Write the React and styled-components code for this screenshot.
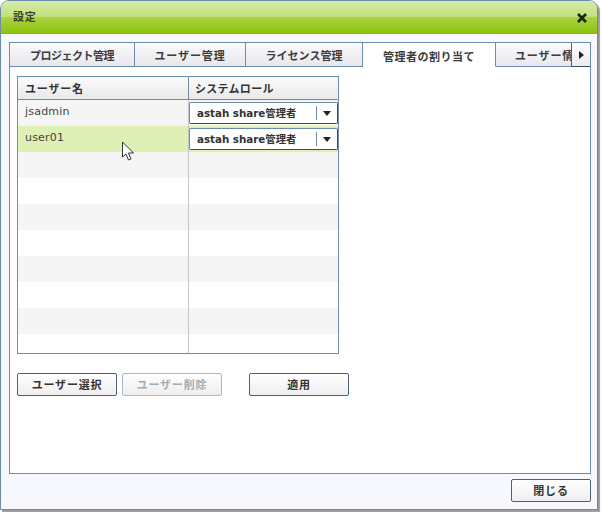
import styled, {createGlobalStyle} from 'styled-components'

const Global = createGlobalStyle`
  html, body { margin: 0; padding: 0; background: #fff; }
  * { box-sizing: border-box; }
  body { font-family: "DejaVu Sans", "Noto Sans CJK JP", sans-serif; font-size: 11px; color: #333; }
`
const Page = styled.div`
  width: 602px;
  height: 512px;
  overflow: hidden;
  position: relative;
`
const Window = styled.div`
  width: 598px;
  height: 510px;
  display: flex;
  flex-direction: column;
  background: #f6f8fe;
  border: 1px solid #6c8cab;
  border-radius: 9px 9px 0 0;
  box-shadow: 2px 2px 1px #9a9a9a;
  overflow: hidden;
`
const TitleBar = styled.div`
  height: 33px;
  flex: none;
  display: flex;
  align-items: center;
  justify-content: space-between;
  padding: 0 9px 0 12px;
  background: linear-gradient(#d6eba4 0, #c2e180 48%, #a9d33f 52%, #8cc30f 100%);
  border-bottom: 1px solid #86bb0e;
`
const Title = styled.span`
  font: bold 11px "Noto Sans CJK JP", sans-serif;
  letter-spacing: 0.7px;
  color: #3a3f2c;
  margin-top: -3px;
`
const CloseIcon = styled.svg`
  width: 12px;
  height: 12px;
  display: block;
  margin-top: 1px;
`
const Content = styled.div`
  flex: 1;
  display: flex;
  padding: 8px 6px 0 8px;
  min-height: 0;
`
const TabPanel = styled.div`
  position: relative;
  width: 582px;
  height: 432px;
  border: 1px solid #6c8cab;
  background: #fff;
  display: flex;
  flex-direction: column;
`
const TabBar = styled.div`
  display: flex;
  height: 24px;
  flex: none;
  overflow: hidden;
`
const Tab = styled.div`
  flex: none;
  width: ${p => p.$w}px;
  display: flex;
  align-items: center;
  justify-content: center;
  white-space: nowrap;
  font: bold 11px "Noto Sans CJK JP", sans-serif;
  letter-spacing: ${p => p.$ls}px;
  color: #3c3c3c;
  border-right: 1px solid #6c8cab;
  border-bottom: 1px solid ${p => p.$active ? '#fff' : '#6c8cab'};
  background: ${p => p.$active ? '#fff' : 'linear-gradient(#fbfbfd, #e6e6ec)'};
  padding-top: ${p => p.$active ? '2px' : '0'};
`
const TabFill = styled.div`
  flex: 1;
  border-bottom: 1px solid #6c8cab;
`
const ScrollButton = styled.div`
  position: absolute;
  top: 0;
  right: 0;
  width: 19px;
  height: 24px;
  display: flex;
  align-items: center;
  justify-content: center;
  background: linear-gradient(#fdfdfe, #ececf0);
  border-left: 1px solid #4a6078;
  border-bottom: 1px solid #3e4f60;
  &::after {
    content: '';
    border-left: 5px solid #222;
    border-top: 4px solid transparent;
    border-bottom: 4px solid transparent;
  }
`
const TabBody = styled.div`
  flex: 1;
  padding: 9px 7px 0;
  display: flex;
  flex-direction: column;
`
const Table = styled.div`
  width: 322px;
  height: 278px;
  border: 1px solid #6c8cab;
  display: flex;
  flex-direction: column;
  overflow: hidden;
`
const HeaderRow = styled.div`
  display: grid;
  grid-template-columns: 171px 149px;
  height: 23px;
  flex: none;
  border-bottom: 1px solid #6c8cab;
  background: linear-gradient(#fbfbfb, #e9e9e9);
`
const HeaderCell = styled.div`
  display: flex;
  align-items: center;
  padding-left: ${p => p.$pad}px;
  font: bold 11px "Noto Sans CJK JP", sans-serif;
  letter-spacing: ${p => p.$ls}px;
  color: #333;
  border-right: ${p => p.$last ? '0' : '1px solid #6c8cab'};
`
const Row = styled.div`
  display: grid;
  grid-template-columns: 171px 149px;
  height: 26px;
  flex: none;
  background: ${p => p.$selected ? '#def0b6' : p.$odd ? '#f5f5f5' : '#fff'};
`
const NameCell = styled.div`
  padding: 5px 0 0 7px;
  font-size: 11px;
  line-height: 14px;
  color: #444;
  letter-spacing: 0.2px;
  border-right: 1px solid #c6c6c6;
`
const RoleCell = styled.div`
  padding-top: 2px;
`
const Select = styled.div`
  width: 149px;
  height: 22px;
  display: flex;
  align-items: center;
  background: #fff;
  border: 1px solid #6c8cab;
  border-bottom-color: #3e4f60;
  border-right-color: #3e4f60;
  border-radius: 2px;
  padding-left: 7px;
`
const SelectText = styled.span`
  flex: 1;
  font: bold 10.3px "DejaVu Sans", "Noto Sans CJK JP", sans-serif;
  color: #333;
  white-space: nowrap;
  margin-bottom: 2px;
`
const SelectArrow = styled.span`
  width: 21px;
  height: 14px;
  display: flex;
  align-items: center;
  justify-content: center;
  border-left: 1px solid #6c8cab;
  &::after {
    content: '';
    border-top: 5px solid #222;
    border-left: 4px solid transparent;
    border-right: 4px solid transparent;
  }
`
const Actions = styled.div`
  display: flex;
  margin-top: 19px;
  gap: 5px;
`
const Button = styled.div`
  width: 100px;
  height: 23px;
  display: flex;
  align-items: center;
  justify-content: center;
  padding-bottom: 2px;
  font: bold 11px "Noto Sans CJK JP", sans-serif;
  letter-spacing: 0.8px;
  color: ${p => p.$disabled ? '#a4acb0' : '#333'};
  background: linear-gradient(#ffffff, #eeeeee);
  border: 1px solid ${p => p.$disabled ? '#aab8c4' : '#4d6074'};
  border-radius: 2px;
  margin-left: ${p => p.$gap || 0}px;
`
const Footer = styled.div`
  flex: none;
  height: 36px;
  display: flex;
  justify-content: flex-end;
  padding: 6px 6px 0 0;
`
const CloseButton = styled(Button)`
  width: 80px;
`
const Cursor = styled.svg`
  position: absolute;
  left: 121px;
  top: 141px;
  width: 15px;
  height: 21px;
`

const rows = [
  {name: 'jsadmin', role: 'astah share管理者'},
  {name: 'user01', role: 'astah share管理者', selected: true},
  {}, {}, {}, {}, {}, {}, {}, {},
]

const tabs = [
  {label: 'プロジェクト管理', w: 125, ls: -0.5},
  {label: 'ユーザー管理', w: 111, ls: 0.9},
  {label: 'ライセンス管理', w: 117, ls: 0},
  {label: '管理者の割り当て', w: 133, ls: 0.5, active: true},
  {label: 'ユーザー情報', w: 110, ls: 0.9},
]

const App = () => {
  return (
    <Page>
      <Global />
      <Window>
        <TitleBar>
          <Title>設定</Title>
          <CloseIcon viewBox="0 0 12 12">
            <path d="M2 2 L10 10 M10 2 L2 10" stroke="#1c2412" strokeWidth="2.6" />
          </CloseIcon>
        </TitleBar>
        <Content>
          <TabPanel>
            <TabBar>
              {tabs.map(t => (
                <Tab key={t.label} $w={t.w} $ls={t.ls} $active={t.active}>{t.label}</Tab>
              ))}
              <TabFill />
            </TabBar>
            <ScrollButton />
            <TabBody>
              <Table>
                <HeaderRow>
                  <HeaderCell $pad={7} $ls={0.8}>ユーザー名</HeaderCell>
                  <HeaderCell $pad={6} $ls={0.3} $last>システムロール</HeaderCell>
                </HeaderRow>
                {rows.map((r, i) => (
                  <Row key={i} $odd={i % 2 === 0} $selected={r.selected}>
                    <NameCell>{r.name}</NameCell>
                    <RoleCell>
                      {r.role && (
                        <Select>
                          <SelectText>{r.role}</SelectText>
                          <SelectArrow />
                        </Select>
                      )}
                    </RoleCell>
                  </Row>
                ))}
              </Table>
              <Actions>
                <Button>ユーザー選択</Button>
                <Button $disabled>ユーザー削除</Button>
                <Button $gap={22}>適用</Button>
              </Actions>
            </TabBody>
          </TabPanel>
        </Content>
        <Footer>
          <CloseButton>閉じる</CloseButton>
        </Footer>
      </Window>
      <Cursor viewBox="0 0 15 21">
        <path d="M1.5 1 L1.5 16 L5 13 L7.5 19 L10 18 L7.5 12 L12.5 12 Z" fill="#fff" stroke="#333" strokeWidth="1" />
      </Cursor>
    </Page>
  )
}

export default App
